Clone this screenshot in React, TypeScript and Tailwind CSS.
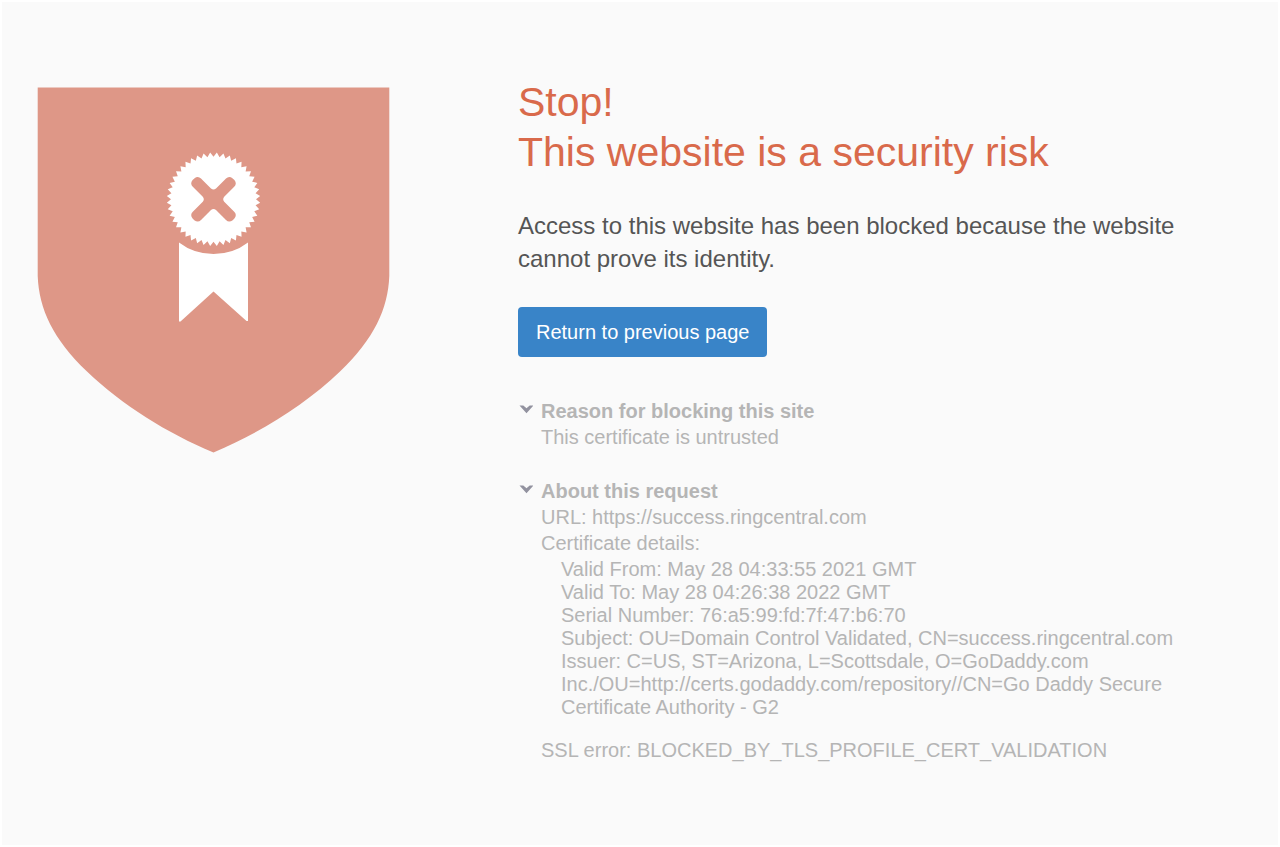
import { useState, type ReactNode } from "react";

const TEETH = 44;

function sealPoints(cx: number, cy: number, outer: number, inner: number) {
  const points: string[] = [];
  for (let i = 0; i < TEETH * 2; i++) {
    const angle = (i * Math.PI) / TEETH;
    const radius = i % 2 === 0 ? inner : outer;
    const x = cx + radius * Math.sin(angle);
    const y = cy - radius * Math.cos(angle);
    points.push(`${x.toFixed(2)},${y.toFixed(2)}`);
  }
  return points.join(" ");
}

function ShieldGraphic() {
  return (
    <svg viewBox="0 0 353 366" className="block w-full" role="img" aria-label="Untrusted certificate">
      <path
        fill="#de9787"
        d="M0.7 0.4H352.3V189C351 222 337 252 303 284.500C268 318 223 346 176.500 365.500C130 346 85 318 50 284.500C16 252 2 222 0.7 189Z"
      />
      <polygon fill="#fff" points={sealPoints(176.5, 112.3, 46.8, 42.5)} />
      <path
        fill="#fff"
        d="M142 155.500Q157 167 176.500 167T211 155.500V234H209.500L176.500 204.500L143.500 234.500H142Z"
      />
      <path
        transform="translate(176.5 112.3)"
        fill="#de9787"
        d="M-2.500 -10.700L-12.500 -20.700Q-15.500 -23.800 -19.200 -20.900L-20.900 -19.200Q-23.800 -15.500 -20.700 -12.500L-10.700 -2.500Q-8.700 0 -10.700 2.500L-20.700 12.500Q-23.800 15.500 -20.900 19.200L-19.200 20.900Q-15.500 23.800 -12.500 20.700L-2.500 10.700Q0 8.700 2.500 10.700L12.500 20.700Q15.500 23.800 19.200 20.900L20.900 19.200Q23.800 15.500 20.700 12.500L10.700 2.500Q8.700 0 10.700 -2.500L20.700 -12.500Q23.800 -15.500 20.900 -19.200L19.200 -20.900Q15.500 -23.800 12.500 -20.700L2.500 -10.700Q0 -8.700 -2.500 -10.700Z"
      />
    </svg>
  );
}

function Section({ title, children }: { title: string; children: ReactNode }) {
  const [open, setOpen] = useState(true);
  return (
    <section>
      <h2>
        <button
          type="button"
          aria-expanded={open}
          onClick={() => setOpen(!open)}
          className="flex cursor-pointer gap-2 text-left font-bold"
        >
          <svg
            viewBox="0 0 15 9"
            className={open ? "mt-[7px] h-[9px] w-[15px] shrink-0" : "mt-[7px] h-[9px] w-[15px] shrink-0 -rotate-90"}
            aria-hidden="true"
          >
            <path fill="#92929f" d="M1.500 0.500H5.300L8.500 3.300L11.700 0.500H15.500L8.500 8.300Z" />
          </svg>
          {title}
        </button>
      </h2>
      {open && <div className="pl-[23px]">{children}</div>}
    </section>
  );
}

export default function App() {
  return (
    <main className="min-h-screen border-2 border-white bg-[#fafafa] px-[35px] pt-[75px] pb-20 font-['Liberation_Sans',Arial,sans-serif]">
      <div className="flex flex-col gap-12 md:flex-row md:gap-32">
        <div className="w-full max-w-[353px] shrink pt-[10px] md:basis-[353px]">
          <ShieldGraphic />
        </div>

        <div className="min-w-0 max-w-[680px] flex-1">
          <h1 className="text-[41px] leading-[50px] text-[#d96a4b]">
            Stop!
            <br />
            This website is a security risk
          </h1>

          <p className="mt-8 text-[24px] leading-[33px] text-[#555]">
            Access to this website has been blocked because the website cannot prove its identity.
          </p>

          <button
            type="button"
            onClick={() => window.history.back()}
            className="mt-8 flex h-[50px] cursor-pointer items-center rounded bg-[#3984c8] px-[18px] text-[20px] text-white"
          >
            Return to previous page
          </button>

          <div className="mt-[41px] flex flex-col gap-7 text-[20px] leading-[26px] text-[#b5b5b5]">
            <Section title="Reason for blocking this site">
              <p>This certificate is untrusted</p>
            </Section>

            <Section title="About this request">
              <p>URL: https://success.ringcentral.com</p>
              <p>Certificate details:</p>
              <ul className="pt-0.5 pl-5 leading-[23px]">
                <li>Valid From: May 28 04:33:55 2021 GMT</li>
                <li>Valid To: May 28 04:26:38 2022 GMT</li>
                <li>Serial Number: 76:a5:99:fd:7f:47:b6:70</li>
                <li>Subject: OU=Domain Control Validated, CN=success.ringcentral.com</li>
                <li>
                  Issuer: C=US, ST=Arizona, L=Scottsdale, O=GoDaddy.com
                  Inc./OU=http://certs.godaddy.com/repository//CN=Go Daddy Secure Certificate Authority - G2
                </li>
              </ul>
              <p className="mt-[18px]">SSL error: BLOCKED_BY_TLS_PROFILE_CERT_VALIDATION</p>
            </Section>
          </div>
        </div>
      </div>
    </main>
  );
}
